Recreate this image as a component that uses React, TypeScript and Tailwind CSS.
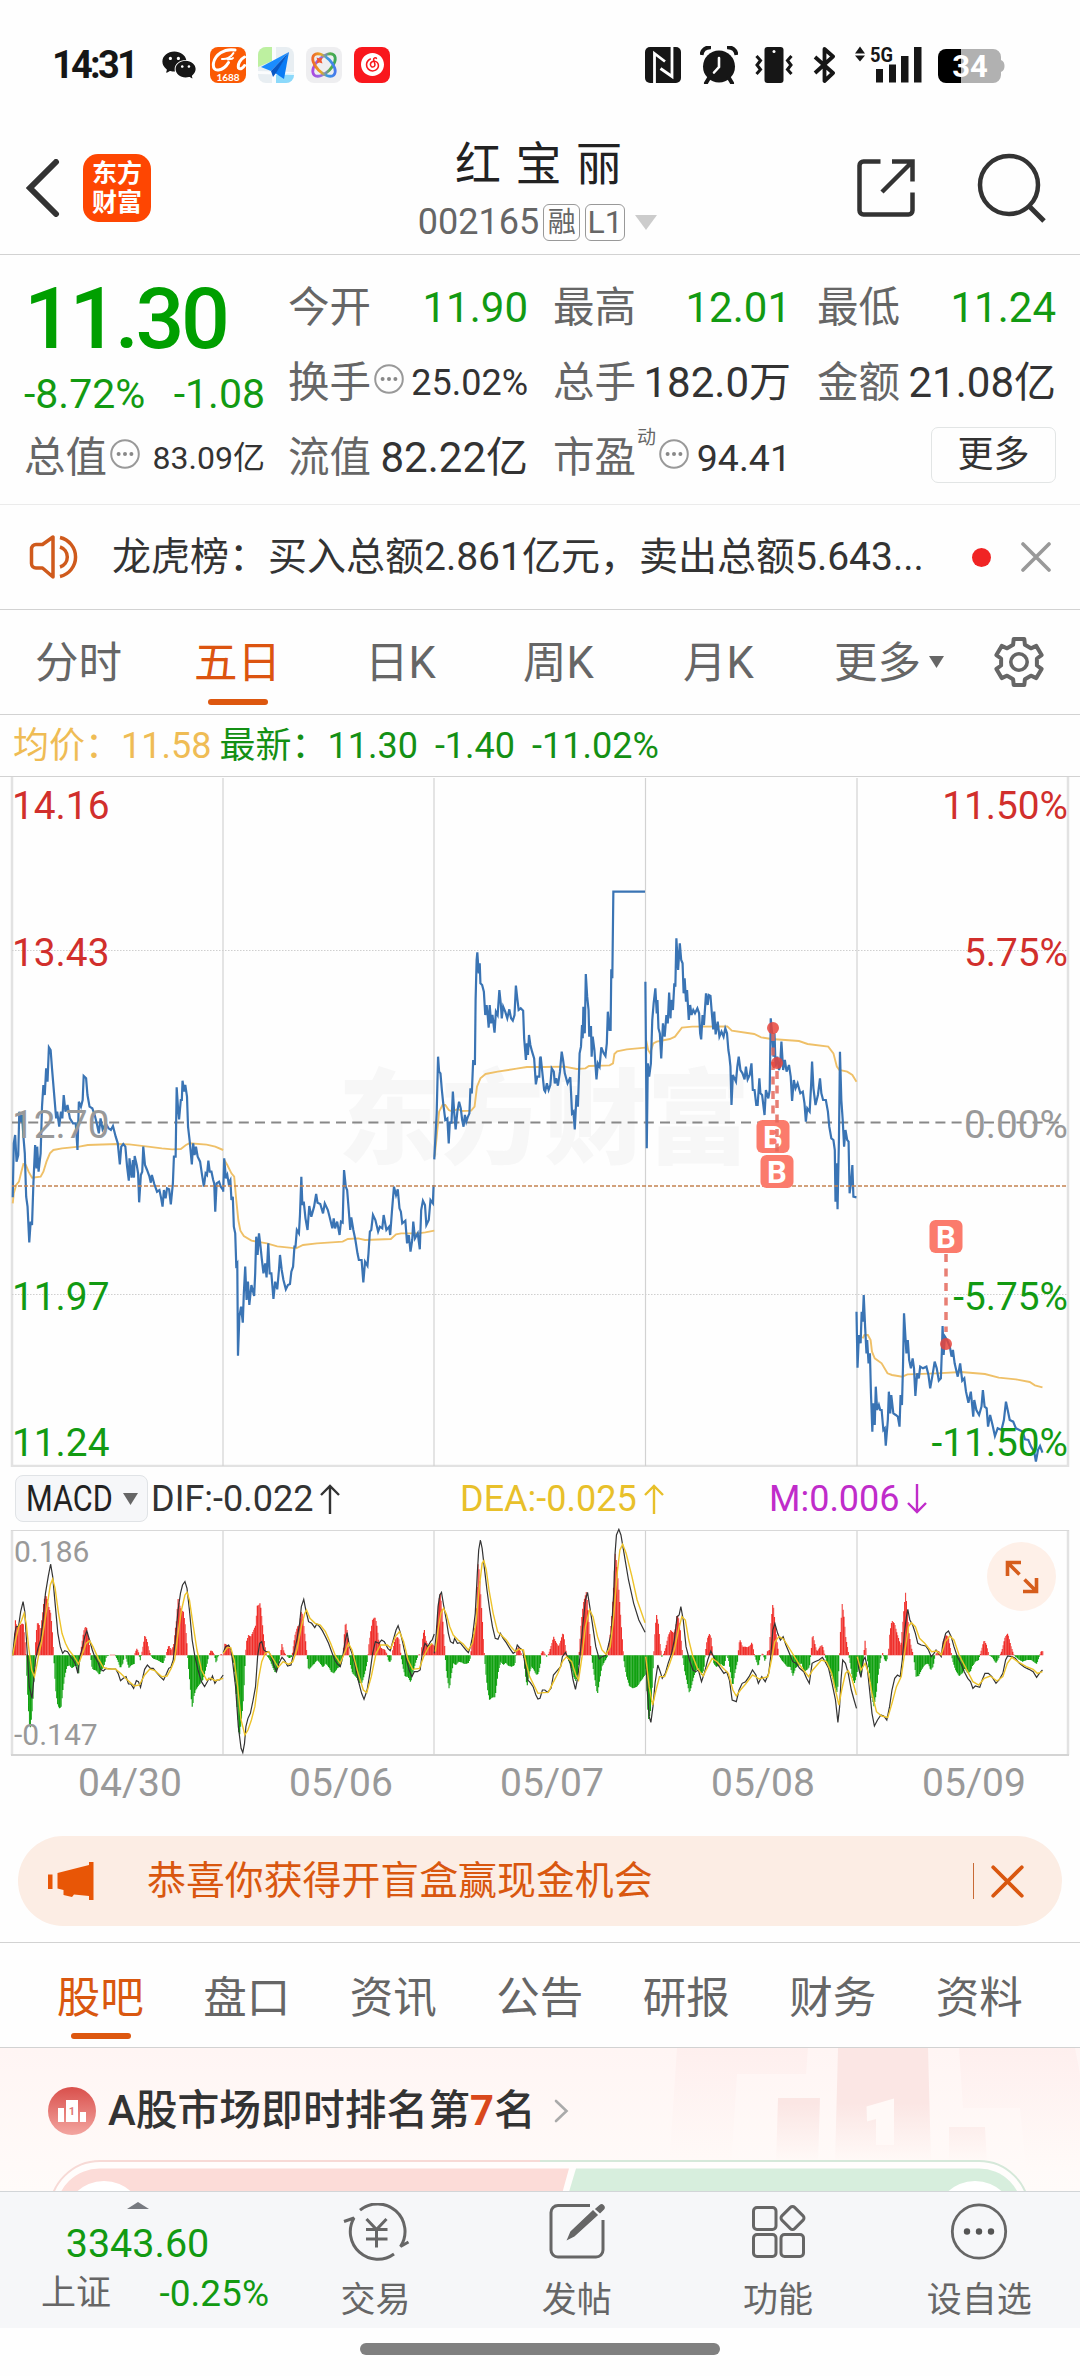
import React from "react";
import { AiFillWechat } from "react-icons/ai";
import { SiNeteasecloudmusic } from "react-icons/si";

/* ---------- Chart data: "x,y" pairs in the chart's own units, one string per trading day ---------- */

const PRICE = [
  "37,472 40,310 44,285 48,365 53,345 56,215 60,245 64,225 68,290 72,340 76,470 80,500 85,607 89,545 93,555 97,430 102,315 106,385 108,320 112,395 118,340 122,200 126,135 130,165 134,85 138,125 142,22 147,30 151,85 157,160 163,235 166,215 172,260 177,215 181,235 185,165 190,215 196,195 203,235 212,250 220,250 225,330 229,185 235,200 240,180 243,108 250,115 254,165 260,200 268,205 275,225 282,255 287,280 292,235 298,268 307,250 315,265 322,270 328,258 336,290 342,310 348,373 352,320 358,312 364,320 369,380 374,422 376,355 382,413 386,360 389,413 391,348 397,375 401,400 404,487 409,405 413,395 416,320 421,375 427,390 434,410 438,428 441,405 448,432 456,455 463,450 468,475 472,500 476,450 481,475 485,445 491,448 496,493 502,430 505,350 510,350 513,142 517,205 520,238 525,180 528,180 530,122 535,155 538,135 543,170 546,260 551,305 557,373 561,310 565,345 569,320 574,350 581,365 586,400 592,440 597,400 601,405 605,362 609,395 614,395 619,420 622,430 625,515 629,430 636,425 641,440 648,450",
  "648,455 651,355 656,415 660,405 664,430 669,420 672,480 676,470 679,560 683,580 686,675 689,670 691,947 695,830 700,800 705,848 708,760 712,680 716,780 720,725 724,795 730,735 738,768 741,700 744,590 748,645 752,580 756,615 760,655 765,700 770,670 774,712 779,610 783,700 788,700 794,777 799,725 805,748 810,690 813,645 818,690 823,720 830,748 836,735 842,732 846,695 851,680 855,620 858,620 862,570 868,580 871,525 875,410 878,495 882,485 887,535 893,570 898,498 904,530 912,500 918,462 922,488 930,492 938,520 943,490 952,510 957,530 965,565 969,535 973,565 979,545 986,585 990,545 995,548 999,390 1004,440 1008,450 1013,515 1017,570 1020,532 1026,570 1032,600 1038,640 1042,660 1050,660 1055,727 1060,665 1067,677 1070,640 1074,575 1078,570 1083,525 1090,540 1098,575 1103,560 1110,565 1114,525 1122,570 1130,560 1133,585 1138,515 1144,440 1150,465 1155,448 1160,505 1164,515 1168,550 1177,542 1182,610 1187,585 1192,635 1197,600 1200,545 1205,595 1213,580 1219,628 1223,510 1228,482 1234,495 1238,555 1245,540 1250,480 1257,490 1259,435",
  "1261,358 1268,220 1272,50 1275,95 1279,100 1283,150 1287,190 1293,240 1299,235 1303,310 1306,248 1311,248 1315,155 1319,220 1323,268 1328,215 1333,185 1338,205 1342,240 1346,260 1350,225 1354,245 1358,232 1363,220 1366,145 1370,160 1374,60 1379,75 1381,-120 1384,-240 1386,-263 1390,-200 1393,-230 1395,-170 1400,-165 1405,-145 1409,-75 1413,-105 1416,-75 1419,-37 1422,-105 1426,-50 1430,-75 1436,-22 1440,-85 1445,-75 1450,-150 1454,-110 1457,-65 1461,-100 1467,-85 1473,-65 1479,-92 1484,-65 1489,-58 1494,-75 1498,-163 1502,-125 1506,-90 1512,-95 1519,-88 1522,-5 1527,60 1530,10 1533,45 1536,-15 1540,15 1545,35 1551,55 1556,133 1560,110 1566,110 1568,55 1570,50 1576,110 1580,150 1583,155 1588,130 1593,150 1598,135 1602,85 1608,95 1611,130 1615,115 1620,137 1626,95 1631,35 1635,60 1640,100 1648,130 1656,112 1661,220 1665,215 1669,268 1674,165 1678,200 1681,110 1683,40 1687,20 1690,-45 1692,-5 1694,-100 1698,-20 1701,-198 1705,-130 1709,-90 1711,-10 1716,-42 1718,50 1721,-10 1726,30 1732,118 1736,70 1741,80 1746,22 1753,40 1758,48 1762,10 1765,-85 1770,-30 1773,-30 1775,-212 1778,-185 1781,-445 1873,-445",
  "1874,-175 1878,325 1881,70 1885,110 1890,70 1894,-60 1898,-110 1903,-155 1907,-80 1909,-120 1912,-35 1916,-20 1920,55 1925,-50 1930,-10 1935,-75 1939,-50 1943,-142 1947,-65 1949,-120 1954,-90 1958,-170 1961,-160 1964,-305 1969,-210 1974,-290 1978,-240 1982,-230 1985,-140 1988,-185 1992,-115 1995,-150 2000,-60 2004,-105 2008,-75 2013,-90 2018,-80 2025,-95 2030,-80 2033,-20 2036,-2 2040,-75 2044,-45 2050,-140 2055,-105 2058,-135 2063,-132 2067,-80 2071,-32 2074,-85 2078,-17 2084,-55 2089,-10 2095,-25 2101,-10 2106,-35 2111,-20 2115,30 2118,50 2121,80 2124,195 2128,105 2137,125 2141,80 2145,50 2150,90 2156,100 2162,118 2166,80 2171,118 2177,105 2182,70 2186,150 2191,150 2196,195 2200,195 2205,115 2208,160 2213,165 2220,225 2224,150 2231,175 2235,150 2238,-65 2242,-20 2246,50 2249,-20 2252,80 2257,50 2262,90 2265,80 2269,5 2274,90 2279,60 2284,95 2291,75 2296,110 2300,183 2305,120 2310,145 2316,130 2324,160 2331,155 2336,190 2340,245 2344,205 2351,215 2355,140 2358,65 2362,145 2368,195 2375,165 2381,115 2385,160 2390,180 2398,180 2404,215 2408,260 2414,295 2420,300 2424,330 2426,485 2429,370 2432,508 2436,300 2439,35 2443,180 2447,240 2451,320 2455,270 2460,300 2464,305 2467,460 2471,430 2475,375 2478,470 2487,472",
  "2487,815 2490,983 2494,885 2499,910 2502,815 2505,845 2508,765 2512,860 2516,940 2518,900 2522,970 2526,940 2529,1060 2533,1175 2536,1090 2540,1155 2543,1040 2547,1110 2552,1095 2556,1110 2560,1110 2565,1170 2569,1165 2572,1217 2578,1140 2581,1055 2585,1120 2588,1065 2594,1120 2601,1125 2607,1130 2612,1160 2615,1065 2619,1095 2622,980 2625,820 2629,890 2632,940 2636,900 2640,960 2645,985 2650,955 2654,985 2658,1068 2663,1000 2668,1015 2672,980 2680,985 2690,980 2696,1005 2701,1045 2707,1010 2714,965 2720,985 2726,1022 2732,1015 2735,930 2737,858 2740,945 2744,890 2750,900 2758,920 2763,950 2767,930 2772,970 2781,1010 2788,970 2794,1022 2800,1015 2805,1055 2812,1088 2819,1055 2826,1130 2829,1080 2835,1110 2843,1125 2850,1100 2854,1050 2859,1100 2865,1105 2869,1160 2875,1125 2882,1155 2889,1188 2897,1165 2908,1170 2915,1140 2921,1085 2926,1110 2932,1140 2942,1145 2950,1165 2960,1170 2970,1175 2976,1198 2986,1200 2994,1220 3003,1235 3008,1265 3014,1230 3020,1218 3027,1238",
];

const AVERAGE = [
  "37,490 40,460 47,435 55,425 62,395 68,372 75,375 83,395 93,413 118,410 126,395 135,365 145,340 155,330 180,325 230,320 255,315 340,312 375,313 430,320 470,325 500,328 525,327 540,315 550,310 600,314 625,320 648,330",
  "650,358 660,375 672,400 680,410 686,480 692,540 698,572 708,588 730,602 775,610 805,619 860,625 880,615 920,610 995,605 1010,597 1040,595 1060,600 1135,597 1150,583 1165,580 1215,580 1235,577 1261,572",
  "1262,350 1268,290 1275,215 1285,195 1293,195 1303,210 1312,214 1330,207 1340,213 1368,212 1378,200 1385,140 1395,115 1410,102 1445,95 1500,86 1530,81 1580,81 1640,80 1675,87 1700,85 1710,78 1770,76 1780,70 1784,42 1792,34 1820,28 1874,23",
  "1876,0 1882,30 1888,40 1897,10 1907,5 1945,-3 1960,-10 1980,-37 2010,-40 2112,-41 2125,-28 2190,-18 2210,-8 2240,-3 2320,3 2345,12 2405,20 2420,40 2430,80 2437,90 2460,95 2475,105 2487,125",
  "2505,895 2510,885 2520,885 2528,900 2532,935 2540,955 2560,970 2577,1000 2590,1005 2620,1010 2635,1003 2720,1000 2790,996 2860,1002 2900,1013 2950,1018 2990,1026 3005,1036 3027,1042",
];

const DIF = [
  "37,586 43,520 47,500 54,498 60,455 67,425 72,455 78,560 85,680 93,715 99,650 103,600 110,565 118,540 125,480 132,400 140,350 147,312 153,350 160,430 168,520 175,560 182,580 188,572 196,575 205,590 213,600 220,615 226,640 232,590 240,560 246,530 252,513 260,540 268,570 275,590 284,605 292,628 300,633 308,625 325,627 336,627 343,640 350,662 358,655 366,650 373,672 380,672 388,685 396,662 402,665 408,682 414,655 420,628 428,615 437,625 445,625 455,638 465,650 475,660 484,640 490,625 496,622 503,600 510,530 517,450 524,400 530,375 537,365 543,385 550,450 558,540 566,590 575,630 585,665 594,680 602,665 607,655 612,660 617,648 624,670 630,660 638,660 648,645",
  "648,578 655,560 664,555 671,570 676,610 684,680 692,800 700,865 705,878 710,850 714,800 720,775 727,760 735,720 742,680 748,590 754,550 760,545 766,570 773,575 780,575 788,590 795,615 803,635 810,610 819,592 826,600 835,618 845,615 853,580 862,540 870,490 875,440 882,418 888,450 896,485 905,490 914,503 920,492 928,500 936,512 945,530 954,550 963,575 972,600 980,612 988,620 995,590 1002,545 1008,518 1015,560 1022,580 1030,610 1040,660 1050,700 1057,718 1066,690 1074,640 1082,580 1090,545 1100,550 1108,540 1116,545 1126,565 1133,572 1142,540 1150,510 1156,497 1163,520 1170,550 1178,590 1188,630 1196,650 1203,635 1212,635 1220,630 1226,580 1234,550 1242,560 1250,545 1255,540 1261,522",
  "1261,580 1266,530 1272,440 1277,405 1282,397 1288,435 1296,480 1302,520 1308,545 1316,550 1320,535 1328,550 1336,548 1345,560 1353,570 1360,578 1366,560 1372,530 1380,460 1386,340 1390,270 1395,240 1400,265 1406,320 1414,390 1422,450 1430,500 1438,535 1446,538 1453,520 1461,535 1470,548 1480,565 1490,580 1497,575 1502,555 1510,565 1518,570 1524,610 1532,660 1540,668 1548,680 1556,705 1562,717 1568,715 1575,690 1582,690 1590,697 1600,685 1607,645 1618,632 1628,620 1633,590 1642,577 1648,590 1656,610 1664,660 1671,688 1678,650 1684,590 1692,500 1700,420 1706,397 1711,430 1720,490 1730,560 1740,597 1748,590 1760,586 1768,550 1775,520 1782,400 1786,280 1790,225 1797,208 1803,225 1812,280 1825,360 1840,430 1855,480 1873,517",
  "1875,590 1880,700 1885,770 1890,787 1896,740 1902,670 1910,615 1917,635 1923,655 1932,640 1940,610 1950,580 1958,540 1966,470 1972,465 1977,440 1984,480 1992,560 2002,600 2012,630 2020,635 2028,630 2037,665 2045,640 2055,600 2064,573 2072,590 2082,610 2092,625 2102,640 2110,635 2118,660 2126,720 2138,725 2146,690 2155,670 2165,665 2175,650 2185,630 2195,645 2202,670 2212,650 2222,665 2232,640 2238,590 2244,510 2250,490 2258,520 2266,540 2274,530 2282,555 2292,580 2302,605 2312,610 2322,625 2334,635 2342,655 2350,670 2358,610 2366,605 2378,600 2388,592 2396,605 2406,625 2416,670 2426,720 2433,787 2438,740 2442,660 2447,600 2455,610 2463,640 2472,690 2480,720 2487,745",
  "2489,590 2494,630 2500,652 2507,600 2512,592 2518,620 2525,690 2532,760 2539,798 2548,780 2558,765 2566,768 2575,780 2583,740 2590,690 2598,655 2606,645 2614,650 2620,600 2626,520 2632,470 2636,448 2642,480 2650,495 2658,520 2665,550 2675,555 2688,558 2696,570 2704,590 2712,580 2718,570 2726,580 2733,590 2738,550 2746,520 2754,513 2762,530 2770,560 2780,590 2790,610 2800,635 2810,655 2818,665 2825,685 2832,678 2845,682 2852,660 2860,640 2870,640 2880,650 2892,670 2902,658 2912,640 2920,600 2926,588 2938,590 2948,595 2960,610 2975,622 2988,628 3000,635 3010,652 3018,640 3027,630",
];

const DEA = [
  "37,586 45,540 55,498 63,480 70,460 76,490 83,560 92,630 100,650 106,620 113,580 120,550 128,500 138,430 146,375 153,357 160,385 170,460 180,520 190,550 200,570 215,590 228,612 240,580 250,550 260,542 270,560 285,595 300,622 315,627 335,627 350,640 370,660 390,678 405,675 420,645 435,627 450,632 470,650 485,648 497,625 507,600 517,520 527,450 537,405 543,397 550,420 560,490 572,570 585,630 600,660 612,655 625,662 648,655",
  "648,580 660,563 670,563 680,600 690,680 700,780 711,825 720,810 730,780 740,740 750,660 760,605 770,580 780,575 795,600 808,622 822,605 838,613 850,605 862,570 875,500 885,460 890,450 900,475 915,490 930,495 945,515 960,550 975,590 988,610 1000,580 1012,550 1022,570 1040,640 1055,690 1065,698 1078,650 1092,580 1105,555 1125,555 1135,565 1148,530 1160,515 1172,545 1185,600 1198,628 1218,625 1230,590 1245,560 1255,550",
  "1264,575 1272,510 1280,460 1288,445 1296,462 1306,500 1316,525 1330,540 1345,552 1360,570 1372,550 1382,490 1392,380 1400,310 1405,302 1412,330 1420,390 1432,460 1445,515 1455,525 1470,540 1485,562 1496,575 1506,568 1520,570 1528,610 1538,650 1550,675 1562,700 1578,698 1592,697 1605,670 1620,640 1633,605 1645,590 1660,605 1672,645 1680,660 1690,590 1700,500 1712,450 1722,470 1735,530 1748,570 1760,583 1772,560 1782,470 1792,340 1800,270 1808,253 1818,280 1835,350 1850,420 1873,488",
  "1875,590 1885,680 1895,735 1905,690 1915,650 1930,650 1945,610 1958,570 1970,510 1980,470 1990,480 2000,540 2012,590 2025,625 2042,648 2055,620 2068,595 2082,605 2100,625 2115,640 2128,690 2138,708 2150,690 2165,672 2185,645 2205,657 2230,650 2240,600 2250,545 2262,530 2275,537 2295,570 2320,612 2348,650 2360,630 2385,600 2400,605 2415,640 2428,700 2436,735 2444,690 2455,640 2463,632 2472,650 2487,705",
  "2489,590 2500,630 2512,610 2522,640 2532,700 2545,755 2560,768 2578,772 2590,730 2603,680 2617,650 2628,570 2638,500 2646,488 2658,500 2670,535 2685,550 2705,575 2720,573 2733,585 2745,545 2758,528 2770,540 2785,585 2805,625 2825,665 2842,675 2858,655 2875,648 2895,663 2912,650 2925,610 2938,592 2955,605 2980,620 3000,628 3012,640 3027,635",
];

const HISTOGRAM =
  "37,586 40,530 43,480 47,500 52,500 57,495 62,490 66,492 70,530 74,586 76,640 80,730 85,815 89,780 93,740 97,660 101,590 102,540 106,490 111,490 116,515 121,470 126,420 131,405 136,420 141,445 146,460 150,510 154,580 157,640 161,700 166,735 171,745 176,740 181,690 187,645 193,620 200,615 207,625 215,618 222,618 227,640 230,600 232,580 236,550 241,515 246,500 251,505 256,540 261,586 266,625 272,630 279,632 287,645 293,630 300,620 307,590 320,584 332,584 340,600 348,625 355,610 361,580 366,600 373,625 380,615 388,612 390,580 396,565 402,580 405,605 410,580 416,545 419,525 425,540 431,570 436,586 442,595 450,598 460,603 472,610 480,586 484,570 489,555 495,570 502,560 507,510 511,480 515,415 520,435 525,450 531,455 537,500 542,560 544,600 549,660 553,710 557,745 562,705 567,690 573,680 580,670 587,660 593,640 600,610 605,586 611,570 616,575 621,584 626,610 631,590 640,582 648,586 " +
  "650,550 658,555 666,560 672,590 677,610 682,670 688,760 693,835 698,790 704,735 708,660 711,586 714,545 720,525 727,530 735,510 741,495 745,437 750,435 754,428 758,465 763,520 768,560 773,586 782,600 790,620 798,640 805,620 812,586 817,552 823,575 830,586 838,595 846,590 850,560 855,525 862,500 868,495 874,450 880,490 886,545 890,586 894,630 903,620 912,610 920,600 928,610 936,622 944,610 952,620 960,635 968,640 978,625 986,620 992,600 996,560 1000,495 1004,490 1008,530 1012,570 1015,610 1022,640 1032,650 1042,670 1050,668 1058,640 1066,600 1069,560 1074,520 1080,480 1087,470 1092,490 1098,540 1106,565 1115,568 1121,580 1127,605 1133,605 1138,575 1145,540 1152,530 1158,540 1163,590 1168,620 1175,650 1183,650 1191,668 1198,635 1206,605 1214,582 1221,586 1225,540 1230,505 1235,540 1242,560 1250,550 1257,555 1261,560 " +
  "1264,540 1268,470 1272,425 1277,400 1282,450 1286,510 1291,580 1293,620 1298,660 1303,690 1308,650 1315,610 1322,615 1330,605 1340,608 1348,612 1358,610 1364,595 1368,555 1374,520 1380,480 1384,380 1387,300 1390,340 1394,400 1399,480 1403,560 1406,600 1410,650 1415,695 1420,720 1428,712 1436,712 1441,670 1446,630 1453,605 1460,615 1467,608 1475,618 1485,620 1493,615 1498,575 1503,560 1508,570 1514,586 1519,590 1523,640 1529,680 1535,640 1542,620 1549,630 1556,645 1562,640 1568,610 1570,580 1574,572 1580,580 1586,590 1592,580 1598,560 1606,530 1612,545 1620,560 1626,545 1633,515 1638,545 1643,580 1648,600 1656,620 1664,650 1671,665 1676,640 1680,580 1685,500 1692,430 1701,395 1705,440 1710,510 1715,580 1720,620 1726,660 1733,705 1739,665 1746,620 1754,605 1762,590 1766,560 1774,480 1780,380 1785,280 1790,320 1796,400 1802,490 1808,575 1811,610 1818,650 1826,678 1836,685 1848,680 1860,662 1874,640 " +
  "1875,600 1877,700 1881,780 1886,765 1891,710 1895,620 1898,560 1901,500 1905,465 1910,490 1915,550 1920,590 1926,580 1932,560 1938,530 1946,510 1954,520 1960,505 1964,465 1968,470 1973,500 1978,560 1981,590 1986,630 1993,665 2000,700 2006,680 2013,650 2020,630 2028,625 2035,645 2042,630 2047,575 2052,535 2058,522 2063,530 2068,580 2071,610 2078,620 2086,618 2093,612 2101,620 2108,582 2114,600 2120,640 2126,680 2132,640 2140,605 2144,550 2148,540 2154,560 2162,560 2170,562 2178,555 2182,545 2188,580 2194,600 2200,620 2206,590 2213,578 2220,605 2226,575 2232,570 2237,490 2243,425 2248,480 2254,540 2260,586 2268,600 2276,610 2284,620 2293,620 2301,648 2308,625 2318,615 2326,610 2333,635 2341,630 2349,620 2354,570 2358,520 2364,550 2371,575 2379,560 2386,555 2393,582 2398,605 2406,625 2414,650 2422,680 2430,700 2435,610 2439,510 2444,430 2449,470 2454,530 2462,578 2467,610 2473,650 2480,670 2487,640 " +
  "2489,610 2498,650 2505,605 2510,540 2516,590 2523,640 2530,710 2536,740 2543,700 2549,640 2555,600 2561,578 2567,600 2573,605 2579,570 2582,520 2588,482 2596,490 2603,520 2609,540 2614,560 2618,510 2623,450 2628,395 2633,455 2638,520 2644,560 2651,586 2658,650 2666,648 2674,630 2683,615 2693,610 2701,630 2708,620 2714,585 2723,572 2732,582 2737,545 2744,525 2752,530 2759,570 2764,600 2773,630 2783,648 2793,640 2800,625 2808,640 2816,635 2822,618 2831,605 2840,600 2848,570 2856,540 2863,555 2870,586 2880,592 2890,610 2898,595 2908,570 2917,530 2925,520 2933,555 2943,586 2956,598 2968,605 2980,600 2993,600 3009,612 3016,590 3022,572 3028,575";

const ZERO = 586;
const BAR_STEP = 2.554;

/** Samples the histogram envelope into evenly spaced bars above and below the zero line. */
function histogramBars() {
  const pts = HISTOGRAM.split(" ").map((p) => p.split(",").map(Number));
  let up = "";
  let upAlt = "";
  let down = "";
  let downAlt = "";
  let seg = 0;
  let i = 0;
  for (let x = 38; x < 3028; x += BAR_STEP) {
    while (seg < pts.length - 2 && pts[seg + 1][0] < x) seg++;
    const [x0, y0] = pts[seg];
    const [x1, y1] = pts[seg + 1];
    const t = Math.min(1, Math.max(0, (x - x0) / (x1 - x0 || 1)));
    const y = Math.round(y0 + (y1 - y0) * t);
    const bar = `M${x.toFixed(1)} ${ZERO}V${y}h${(BAR_STEP * 1.3).toFixed(2)}V${ZERO}z`;
    const alt = i % 3 === 0;
    if (y < ZERO) alt ? (upAlt += bar) : (up += bar);
    else alt ? (downAlt += bar) : (down += bar);
    i++;
  }
  return { up, upAlt, down, downAlt };
}

const BARS = histogramBars();

const DAY_LINES = [223, 434, 645.5, 857];

/* ---------- Icons ---------- */

function Triangle({ w, h, color, up = false }: { w: number; h: number; color: string; up?: boolean }) {
  return (
    <svg width={w} height={h} viewBox={`0 0 ${w} ${h}`} className="shrink-0">
      <path d={up ? `M0 ${h}L${w / 2} 0L${w} ${h}z` : `M0 0H${w}L${w / 2} ${h}z`} fill={color} />
    </svg>
  );
}

function Dots() {
  return (
    <svg width="30" height="30" viewBox="0 0 30 30" className="-mt-2 shrink-0">
      <circle cx="15" cy="15" r="13.8" fill="none" stroke="#999" strokeWidth="2" />
      <circle cx="8.6" cy="15" r="2" fill="#888" />
      <circle cx="15" cy="15" r="2" fill="#888" />
      <circle cx="21.4" cy="15" r="2" fill="#888" />
    </svg>
  );
}

function Cross({ size, color, sw }: { size: number; color: string; sw: number }) {
  return (
    <svg width={size} height={size} viewBox="0 0 30 30" className="shrink-0">
      <path d="M2 2L28 28M28 2L2 28" stroke={color} strokeWidth={sw} strokeLinecap="round" />
    </svg>
  );
}

function Gear() {
  const pts: string[] = [];
  for (let k = 0; k < 6; k++) {
    for (const [da, r] of [[-19, 18.2], [-13, 23.6], [13, 23.6], [19, 18.2]]) {
      const a = ((k * 60 - 90 + da) * Math.PI) / 180;
      pts.push(`${(26 + r * Math.cos(a)).toFixed(1)},${(26 + r * Math.sin(a)).toFixed(1)}`);
    }
  }
  return (
    <svg width="52" height="52" viewBox="0 0 52 52">
      <polygon points={pts.join(" ")} fill="none" stroke="#666" strokeWidth="4" strokeLinejoin="round" />
      <circle cx="26" cy="26" r="8.2" fill="none" stroke="#666" strokeWidth="3.6" />
    </svg>
  );
}

function Arrow({ color, down = false }: { color: string; down?: boolean }) {
  return (
    <svg width="20" height="30" viewBox="0 0 20 30" className={down ? "rotate-180" : ""}>
      <path d="M10 30V2M1 11L10 2L19 11" fill="none" stroke={color} strokeWidth="2.4" />
    </svg>
  );
}

function StatusIcons() {
  return (
    <div className="flex items-center">
      <AiFillWechat className="size-[38px] text-[#161616]" />
      <svg width="36" height="36" viewBox="0 0 36 36" className="ml-[12px]">
        <rect width="36" height="36" rx="8" fill="#fb5a04" />
        <path d="M25 3C14 1 5 8 3.500 16c-.8 5 1.500 7.500 5 7 4.500-.6 8-4 10-7.500" fill="none" stroke="#fff" strokeWidth="3" strokeLinecap="round" />
        <path d="M12 12c4 .5 9-1.500 11.500-6M18 12.500c2-1 3.500.5 5-1.500" fill="none" stroke="#fff" strokeWidth="2" strokeLinecap="round" />
        <path d="M34.500 10c-4 2-7 7-6 11 2 2 4.500 0 6-2.500" fill="none" stroke="#fff" strokeWidth="3" strokeLinecap="round" />
        <text x="18" y="33.5" fontSize="10" fontWeight="700" textAnchor="middle" fill="#fff" fontFamily="Lato">1688</text>
      </svg>
      <svg width="36" height="36" viewBox="0 0 36 36" className="ml-[12px]">
        <rect width="36" height="36" rx="8" fill="#e8eef2" />
        <path d="M0 20V8a8 8 0 0 1 8-8h6v14z" fill="#bdf0a0" />
        <path d="M18 26h18v2a8 8 0 0 1-8 8H18z" fill="#8bd9fb" />
        <path d="M14 0h4v36h-4zM0 24l36 1v3l-36-1z" fill="#fff" opacity=".8" />
        <path d="M31 5L3 20l10 4z" fill="#1a8cff" />
        <path d="M31 5L26 32l-9-6z" fill="#0a7cf5" />
        <path d="M31 5L13 24l2 6 3-4z" fill="#0757c4" />
      </svg>
      <svg width="36" height="36" viewBox="0 0 36 36" className="ml-[12px]">
        <defs>
          <linearGradient id="orbitA" gradientUnits="userSpaceOnUse" x1="8" y1="28" x2="28" y2="8">
            <stop offset="0" stopColor="#b23fe0" />
            <stop offset=".5" stopColor="#8c7be0" />
            <stop offset=".7" stopColor="#58b04a" />
            <stop offset="1" stopColor="#2fa35c" />
          </linearGradient>
          <linearGradient id="orbitB" gradientUnits="userSpaceOnUse" x1="8" y1="8" x2="28" y2="28">
            <stop offset="0" stopColor="#f0562e" />
            <stop offset=".4" stopColor="#e8a923" />
            <stop offset=".6" stopColor="#3a9be0" />
            <stop offset="1" stopColor="#4b6ef0" />
          </linearGradient>
        </defs>
        <rect width="36" height="36" rx="8" fill="#eeeef0" />
        <ellipse cx="18" cy="18" rx="7.500" ry="14" fill="none" stroke="url(#orbitA)" strokeWidth="2.800" transform="rotate(45 18 18)" />
        <ellipse cx="18" cy="18" rx="7.500" ry="14" fill="none" stroke="url(#orbitB)" strokeWidth="2.800" transform="rotate(-45 18 18)" />
        <path d="M10.500 10.500l3 1 3-1-1 3 1 3-3-1-3 1 1-3z" fill="#f0562e" />
      </svg>
      <div className="ml-[12px] flex size-9 items-center justify-center rounded-lg bg-[#f9171d]">
        <SiNeteasecloudmusic className="size-[23px] text-white" />
      </div>
    </div>
  );
}

function SystemIcons() {
  return (
    <div className="flex items-center">
      <svg width="36" height="36" viewBox="0 0 36 36">
        <rect width="36" height="36" rx="5" fill="#161616" />
        <path d="M9.500 36V6.500L20 14.500M27 0V29.500L15.500 21.500" fill="none" stroke="#fff" strokeWidth="2.800" />
      </svg>
      <svg width="38" height="38" viewBox="0 0 38 38" className="ml-[19px]">
        <circle cx="19" cy="20.500" r="16" fill="#161616" />
        <path d="M9 32l-3 5M29 32l3 5" stroke="#161616" strokeWidth="4" strokeLinecap="round" />
        <path d="M1.500 9C2 4 6 1 11 1.200M36.500 9C36 4 32 1 27 1.200" stroke="#161616" strokeWidth="4" fill="none" />
        <path d="M19 12v9l-5 5.500" stroke="#fff" strokeWidth="2.600" fill="none" strokeLinecap="round" />
      </svg>
      <svg width="38" height="36" viewBox="0 0 38 36" className="ml-[17px]">
        <rect x="9.500" width="19" height="36" rx="3" fill="#161616" />
        <circle cx="19" cy="4.500" r="1.500" fill="#fff" />
        <path d="M1.500 9l4 4.500-3.500 4.500 3.500 4.500-4 4.500M36.500 9l-4 4.500 3.500 4.500-3.500 4.500 4 4.500" fill="none" stroke="#161616" strokeWidth="3" />
      </svg>
      <svg width="22" height="38" viewBox="0 0 22 38" className="ml-[20px]">
        <path d="M2 11L20 27L11.500 35V3L20 10.500L2 27" fill="none" stroke="#161616" strokeWidth="3.800" strokeLinejoin="round" />
      </svg>
      <svg width="68" height="37" viewBox="0 0 68 37" className="ml-[20px] overflow-visible">
        <path d="M0 7.500L5 0.500L10 7.500zM0 9.500L5 15.500L10 9.500z" fill="#161616" />
        <text x="15" y="16" fontSize="20.500" fontWeight="700" fill="#161616" fontFamily="Roboto" textLength="23" lengthAdjust="spacingAndGlyphs">5G</text>
        <path d="M21 23h7v13.500h-7zM34 18.500h7v18h-7zM46 10h7.500v26.500H46zM59 1h7.500v35.500H59z" fill="#161616" />
      </svg>
      <div className="relative mt-[2px] ml-[15px] h-[34px] w-[68px]">
        <svg width="68" height="34" viewBox="0 0 68 34">
          <path d="M8 0h47a8 8 0 0 1 8 8v3c2.500 1 3.500 3 3.500 6s-1 5-3.500 6v3a8 8 0 0 1-8 8H8z" fill="#b1b1b1" />
          <path d="M23 0H8a8 8 0 0 0-8 8v18a8 8 0 0 0 8 8h15z" fill="#000" />
        </svg>
        <span className="absolute -top-px left-0 w-[64px] text-center text-[31px] leading-[37px] font-bold text-white">34</span>
      </div>
    </div>
  );
}

/* ---------- Sections ---------- */

function StatusBar() {
  return (
    <div className="flex h-[96px] items-center justify-between pt-[33px] pl-[52px] pr-[74px]">
      <div className="flex items-center">
        <span className="w-[108px] text-[38px] leading-[38px] font-bold tracking-[-2.8px] text-[#161616]">14:31</span>
        <StatusIcons />
      </div>
      <SystemIcons />
    </div>
  );
}

function Header() {
  return (
    <header className="flex h-[159px] items-center justify-between border-b border-[#d2d2d2] pt-[25px] pl-[26px] pr-[34px]">
      <div className="flex w-[303px] items-center">
        <svg width="34" height="58" viewBox="0 0 34 58">
          <path d="M30 3L4 29L30 55" fill="none" stroke="#333" strokeWidth="6" strokeLinecap="round" />
        </svg>
        <div className="ml-[23px] flex size-[68px] flex-col items-center justify-center rounded-[15px] bg-[#fe4602] text-[25px] leading-[29px] font-bold text-white">
          <span>东方</span>
          <span>财富</span>
        </div>
      </div>
      <div className="flex flex-col items-center">
        <h1 className="pl-[2px] text-[46px] leading-[60px] text-[#222] [word-spacing:3px]">红 宝 丽</h1>
        <div className="mt-[10px] flex items-center text-[36px] leading-[37px] text-[#666]">
          <span>002165</span>
          <span className="ml-[4px] flex h-[37px] w-[37px] items-center justify-center rounded-[6px] border-[1.5px] border-[#999] text-[28px]">融</span>
          <span className="ml-[5px] flex h-[37px] w-[40px] items-center justify-center rounded-[6px] border-[1.5px] border-[#999] text-[32px]">L1</span>
          <span className="ml-[10px]">
            <Triangle w={22} h={15} color="#ccc" />
          </span>
        </div>
      </div>
      <div className="flex w-[300px] items-center justify-end">
        <svg width="58" height="58" viewBox="0 0 58 58">
          <path d="M23.500 2.500H6.500a4 4 0 0 0-4 4V51.500a4 4 0 0 0 4 4H51.500a4 4 0 0 0 4-4V33.500M35 2.500H55.500V22.500M55.500 2.500L25 33" fill="none" stroke="#333" strokeWidth="4.500" />
        </svg>
        <svg width="70" height="70" viewBox="0 0 70 70" className="ml-[61px]">
          <circle cx="33" cy="32" r="29" fill="none" stroke="#333" strokeWidth="4.500" />
          <path d="M53 53L68 68" stroke="#333" strokeWidth="5" />
        </svg>
      </div>
    </header>
  );
}

function Cell({ label, value, green, size = "text-[42px]", icon, sup }: { label: string; value: string; green?: boolean; size?: string; icon?: boolean; sup?: string }) {
  return (
    <div className="flex h-[75px] items-center justify-between whitespace-nowrap">
      <div className="flex items-center text-[41.5px] leading-[48px] text-[#666]">
        {label}
        {sup && <span className="mt-[-40px] ml-[1px] text-[19px] leading-[20px]">{sup}</span>}
        {icon && (
          <span className="flex pl-[3px]">
            <Dots />
          </span>
        )}
      </div>
      <div className={`${size} leading-[48px] ${green ? "text-[#129a12]" : "text-[#333]"}`}>{value}</div>
    </div>
  );
}

function Quote() {
  return (
    <section className="flex h-[250px] border-b border-[#ebebeb] pt-[15px] pl-[24px]">
      <div className="w-[241px] whitespace-nowrap">
        <div className="flex h-[97px] items-center text-[86px] leading-[97px] font-medium tracking-[-3.4px] text-[#009f00]">11.30</div>
        <div className="flex h-[54px] items-center justify-between text-[41px] leading-[54px] text-[#129a12]">
          <span>-8.72%</span>
          <span>-1.08</span>
        </div>
        <div className="-mt-px">
          <Cell label="总值" value="83.09亿" size="text-[32px]" icon />
        </div>
      </div>
      <div className="ml-[23px] w-[240px]">
        <Cell label="今开" value="11.90" green />
        <Cell label="换手" value="25.02%" size="text-[36px]" icon />
        <Cell label="流值" value="82.22亿" />
      </div>
      <div className="ml-[25px] w-[238px]">
        <Cell label="最高" value="12.01" green />
        <Cell label="总手" value="182.0万" />
        <Cell label="市盈" value="94.41" size="text-[37.500px]" icon sup="动" />
      </div>
      <div className="ml-[26px] w-[239px]">
        <Cell label="最低" value="11.24" green />
        <Cell label="金额" value="21.08亿" />
        <div className="flex h-[69px] items-center justify-end">
          <button className="h-[56px] w-[125px] rounded-[7px] border-[1.5px] border-[#e2e5e5] text-[36px] leading-[50px] text-[#333]">更多</button>
        </div>
      </div>
    </section>
  );
}

function News() {
  return (
    <section className="flex h-[105px] items-center border-b border-[#d2d2d2] pl-[29px] pr-[29px]">
      <svg width="52" height="46" viewBox="0 0 52 46">
        <path d="M24 3V43L13.500 34H7a4.500 4.500 0 0 1-4.500-4.500V15A4.500 4.500 0 0 1 7 10.500H13.500z" fill="none" stroke="#cf5a1c" strokeWidth="3.500" strokeLinejoin="round" />
        <path d="M31 3.500a20 20 0 0 1 0 39M31 13a10.500 10.500 0 0 1 0 20" fill="none" stroke="#cf5a1c" strokeWidth="3.500" />
      </svg>
      <span className="ml-[31px] text-[39px] leading-[50px] whitespace-nowrap text-[#333]">龙虎榜：买入总额2.861亿元，卖出总额5.643...</span>
      <span className="ml-auto size-[19px] rounded-full bg-[#f02424]" />
      <span className="ml-[30px]">
        <Cross size={30} color="#999" sw={3.6} />
      </span>
    </section>
  );
}

function PeriodTabs() {
  return (
    <nav className="flex h-[105px] items-center border-b border-[#d2d2d2] pt-[4px] text-[43.500px] leading-[60px] whitespace-nowrap text-[#666]">
      <span className="ml-[35px] w-[159px]">分时</span>
      <span className="relative w-[171px] text-[#dc5410]">
        五日
        <i className="absolute top-[65px] left-[14px] h-[6px] w-[60px] rounded-full bg-[#dd570f]" />
      </span>
      <span className="w-[158px]">日K</span>
      <span className="w-[160px]">周K</span>
      <span className="w-[151px]">月K</span>
      <span className="flex items-center">
        更多
        <span className="mt-[-4px] ml-[8px]">
          <Triangle w={15} h={12} color="#666" />
        </span>
      </span>
      <span className="mt-[-4px] ml-auto pr-[35px]">
        <Gear />
      </span>
    </nav>
  );
}

function Summary() {
  return (
    <div className="flex h-[62px] items-center border-b border-[#d2d2d2] pl-[13px] text-[36px] leading-[50px] whitespace-nowrap text-[#149014]">
      <span className="text-[#efbc55]">均价：11.58</span>
      <span className="ml-[8px]">最新：11.30</span>
      <span className="ml-[17px]">-1.40</span>
      <span className="ml-[17px]">-11.02%</span>
    </div>
  );
}

const AXIS = [
  { price: "14.16", pct: "11.50%", place: "top-[5px]", color: "text-[#d12f2c]" },
  { price: "13.43", pct: "5.75%", place: "top-[152px]", color: "text-[#d12f2c]" },
  { price: "12.70", pct: "0.00%", place: "top-[324px]", color: "text-[#999]" },
  { price: "11.97", pct: "-5.75%", place: "top-[496px]", color: "text-[#129a12]" },
  { price: "11.24", pct: "-11.50%", place: "top-[642px]", color: "text-[#129a12]" },
];

function Marker({ x, y, lineX, from, to, dotY }: { x: number; y: number; lineX: number; from: number; to: number; dotY: number }) {
  return (
    <g>
      <rect x={x} y={y} width="33" height="33" rx="6" fill="#fb7b6c" />
      <text x={x + 16.5} y={y + 27.5} fontSize="31" fontWeight="700" textAnchor="middle" fill="#fff" fontFamily="Roboto">B</text>
      <path d={`M${lineX} ${from}V${to}`} stroke="#e5695c" strokeWidth="3.500" strokeDasharray="8 6.500" opacity=".85" />
      <circle cx={lineX} cy={dotY} r="6" fill="#e8453c" opacity=".85" />
    </g>
  );
}

function PriceChart() {
  return (
    <div className="relative h-[690px]">
      <div className="absolute top-[284px] left-[338px] text-[103px] leading-[120px] font-black text-[#f7f7f7]">东方财富</div>
      <svg width="1080" height="690" viewBox="0 0 1080 690" className="absolute inset-0">
        <path d="M12 0V690M1068 0V690M11 689H1069" stroke="#e2e2e2" strokeWidth="2.500" fill="none" />
        {DAY_LINES.map((x) => (
          <path key={x} d={`M${x} 1V689`} stroke="#d2d2d2" strokeWidth="1.200" />
        ))}
        <path d="M12 173.500H1068M12 517.500H1068" stroke="#cfcfcf" strokeWidth="1" strokeDasharray="1.500 1.500" />
        <path d="M12 345.500H1064" stroke="#888" strokeWidth="2" strokeDasharray="10 6.200" />
      </svg>
      <svg width="1080" height="690" viewBox="0 -789 3136 2070" preserveAspectRatio="none" className="absolute inset-0">
        {AVERAGE.map((p) => (
          <polyline key={p.slice(0, 12)} points={p} fill="none" stroke="#efc068" strokeWidth="1.900" vectorEffect="non-scaling-stroke" />
        ))}
        {PRICE.map((p) => (
          <polyline key={p.slice(0, 12)} points={p} fill="none" stroke="#3a74b4" strokeWidth="2.200" vectorEffect="non-scaling-stroke" />
        ))}
      </svg>
      <svg width="1080" height="690" viewBox="0 0 1080 690" className="absolute inset-0">
        <path d="M12 409H1066" stroke="#c38350" strokeWidth="1.300" strokeDasharray="4 2" />
        <Marker x={756.5} y={343} lineX={773} from={256} to={341} dotY={251} />
        <Marker x={760.5} y={378} lineX={777} from={294} to={377} dotY={286} />
        <Marker x={929.500} y={443} lineX={946} from={477} to={555} dotY={567} />
      </svg>
      {AXIS.map((a) => (
        <div key={a.price} className={`absolute right-[12px] left-[12px] flex justify-between text-[38.800px] leading-[48px] ${a.place} ${a.color}`}>
          <span>{a.price}</span>
          <span>{a.pct}</span>
        </div>
      ))}
    </div>
  );
}

function MacdLegend() {
  return (
    <div className="flex h-[63px] items-center pl-[15px] text-[36px] leading-[50px] whitespace-nowrap">
      <button className="flex h-[47px] w-[133px] items-center rounded-[8px] border border-[#e0e3e6] bg-[#f6f7f9] pl-[10px] text-[#222]">
        <span className="inline-block w-[97px] origin-left scale-x-[0.85] text-left">MACD</span>
        <Triangle w={15} h={12} color="#666" />
      </button>
      <div className="ml-[3px] flex w-[309px] items-center gap-[7px] text-[#333]">
        DIF:-0.022
        <Arrow color="#333" />
      </div>
      <div className="flex w-[309px] items-center gap-[7px] text-[#e8c02a]">
        DEA:-0.025
        <Arrow color="#e8c02a" />
      </div>
      <div className="flex items-center gap-[7px] text-[#c02cca]">
        M:0.006
        <Arrow color="#c02cca" down />
      </div>
    </div>
  );
}

function MacdChart() {
  return (
    <div className="relative h-[227px]">
      <svg width="1080" height="227" viewBox="0 0 1080 227" className="absolute inset-0">
        <path d="M12 0V225M1068 0V225" stroke="#e2e2e2" strokeWidth="2.500" fill="none" />
        <path d="M11 .500H1069" stroke="#d8d8d8" strokeWidth="1.200" />
        <path d="M11 225H1069" stroke="#d4d4d4" strokeWidth="2" />
        {DAY_LINES.map((x) => (
          <path key={x} d={`M${x} 1V225`} stroke="#d2d2d2" strokeWidth="1.200" />
        ))}
      </svg>
      <svg width="1080" height="227" viewBox="0 210 3136 681" preserveAspectRatio="none" className="absolute inset-0 overflow-visible">
        <path d={BARS.up} fill="#f02e2a" />
        <path d={BARS.upAlt} fill="#f04a46" />
        <path d={BARS.down} fill="#0fa00f" />
        <path d={BARS.downAlt} fill="#22a822" />
        {DIF.map((p) => (
          <polyline key={p.slice(0, 12)} points={p} fill="none" stroke="#333" strokeWidth="1.200" vectorEffect="non-scaling-stroke" />
        ))}
        {DEA.map((p) => (
          <polyline key={p.slice(0, 12)} points={p} fill="none" stroke="#edc32a" strokeWidth="1.400" vectorEffect="non-scaling-stroke" />
        ))}
      </svg>
      <span className="absolute top-[2px] left-[14px] text-[30px] leading-[40px] text-[#999]">0.186</span>
      <span className="absolute top-[185px] left-[14px] text-[30px] leading-[40px] text-[#999]">-0.147</span>
      <button className="absolute top-[12px] left-[987px] flex size-[69px] items-center justify-center rounded-full bg-[#fef0e8]">
        <svg width="34" height="34" viewBox="0 0 34 34">
          <path d="M16 2.500H2.500V16M2.500 2.500L14.500 14.500M18 31.500H31.500V18M31.500 31.500L19.500 19.500" fill="none" stroke="#d65d1c" strokeWidth="3.600" />
        </svg>
      </button>
    </div>
  );
}

function Dates() {
  return (
    <div className="grid h-[79px] grid-cols-[repeat(5,211px)] pt-[2px] pl-[24.500px] text-center text-[39px] leading-[48px] text-[#999]">
      {["04/30", "05/06", "05/07", "05/08", "05/09"].map((d) => (
        <span key={d}>{d}</span>
      ))}
    </div>
  );
}

function Banner() {
  return (
    <div className="mx-[18px] flex h-[90px] items-center rounded-full bg-[#fcede4] pl-[30px] pr-[38px] text-[#d9570f]">
      <svg width="46" height="38" viewBox="0 0 46 38">
        <path d="M0 12.500h4.500V27H0zM9.500 11L41 3V0h4.500v38H41V34L26 32.500 24 35 15.500 33V28L9.500 26.500z" fill="#e85606" />
      </svg>
      <span className="ml-[53px] text-[38.900px] leading-[50px] whitespace-nowrap">恭喜你获得开盲盒赢现金机会</span>
      <span className="ml-auto mr-[17px] h-[36px] w-px bg-[#c86a35]" />
      <Cross size={33} color="#d9570f" sw={3.4} />
    </div>
  );
}

function ContentTabs() {
  const tabs = ["股吧", "盘口", "资讯", "公告", "研报", "财务", "资料"];
  return (
    <nav className="mt-[16px] grid h-[106px] grid-cols-[repeat(7,146.500px)] border-y border-[#d2d2d2] pl-[27px] text-center text-[43.500px] leading-[111px] text-[#666]">
      {tabs.map((t, i) => (
        <span key={t} className={i === 0 ? "relative text-[#d9570f]" : ""}>
          {t}
          {i === 0 && <i className="absolute top-[90px] left-[44px] h-[6px] w-[60px] rounded-full bg-[#dd570f]" />}
        </span>
      ))}
    </nav>
  );
}

function RankCard() {
  return (
    <section className="relative h-[143px] overflow-hidden bg-gradient-to-b from-[#fff5f4] to-[#fffbf9]">
      <svg width="1080" height="143" viewBox="0 0 1080 143" className="absolute inset-0">
        <defs>
          <linearGradient id="pale" x1="0" y1="0" x2="0" y2="1">
            <stop offset="0" stopColor="#feefee" />
            <stop offset="1" stopColor="#fffaf8" />
          </linearGradient>
          <linearGradient id="rose" gradientUnits="userSpaceOnUse" x1="0" y1="55" x2="0" y2="115">
            <stop offset="0" stopColor="#fbe6e4" />
            <stop offset="1" stopColor="#fffaf8" />
          </linearGradient>
          <linearGradient id="medal" x1="0" y1="0" x2="0" y2="1">
            <stop offset="0" stopColor="#d9504c" />
            <stop offset="1" stopColor="#f3a5a0" />
          </linearGradient>
        </defs>
        <path d="M677 0H808L806 26H737L731 120H669z" fill="url(#pale)" />
        <path d="M959 0H1075L1080 26V120H1026L1020 60H963z" fill="url(#pale)" />
        <path d="M778 50H820L818 115H776zM838 0H928L931 115H835zM949 79H985L987 115H949z" fill="url(#rose)" />
        <path d="M866.500 58.500L894 50.500V97H876V71L867 73.500z" fill="#fff9f7" />
        <path d="M100 113.500H979A49.500 49.500 0 0 1 1028.500 163H50A49.500 49.500 0 0 1 100 113.500z" fill="#fffdfc" />
        <path d="M50 163A50 50 0 0 1 100 113H570" fill="none" stroke="#f7dad6" strokeWidth="2" />
        <path d="M540 113H979A50 50 0 0 1 1029 163" fill="none" stroke="#d5e8d9" strokeWidth="2" />
        <path d="M56 164A43.500 43.500 0 0 1 100 120.500H569L557 164z" fill="#fcdcd8" />
        <path d="M576 120.500H979A43.500 43.500 0 0 1 1022.500 164H563z" fill="#d7eedd" />
        <circle cx="104" cy="173" r="40" fill="#fff" />
        <circle cx="975" cy="173" r="40" fill="#fff" />
        <circle cx="72" cy="63" r="24" fill="url(#medal)" />
        <path d="M58 60h6v14h-6zM66 52h12v22H66zM80 64h6v10h-6z" fill="#fff" />
        <text x="72" y="67" fontSize="11" fontWeight="700" textAnchor="middle" fill="#e07a76" fontFamily="Roboto">1</text>
      </svg>
      <div className="relative flex items-center pt-[35px] pl-[108px] text-[41.800px] leading-[56px] font-medium whitespace-nowrap text-[#333]">
        <span>A股市场即时排名第</span>
        <span className="font-bold text-[#d9481c]">7</span>
        <span>名</span>
        <svg width="15" height="24" viewBox="0 0 15 24" className="ml-[18px]">
          <path d="M2 2L12.500 12L2 22" fill="none" stroke="#aaa" strokeWidth="2.600" strokeLinecap="round" />
        </svg>
      </div>
    </section>
  );
}

function NavItem({ label, children }: { label: string; children: React.ReactNode }) {
  return (
    <div className="flex flex-1 flex-col items-center pt-[11px]">
      <svg width="68" height="60" viewBox="0 0 68 60" fill="none" stroke="#666" strokeWidth="3">
        {children}
      </svg>
      <span className="mt-[14px] text-[35px] leading-[48px] text-[#666]">{label}</span>
    </div>
  );
}

function BottomNav() {
  return (
    <nav className="flex h-[137px] border-t border-[#d2d5d8] bg-[#f6f7f9]">
      <div className="w-[275px] pt-[10px] whitespace-nowrap">
        <div className="flex flex-col items-center">
          <Triangle w={22} h={7} color="#777a80" up />
          <span className="mt-[11px] text-[39.500px] leading-[48px] text-[#129a12]">3343.60</span>
        </div>
        <div className="ml-[41px] flex w-[228px] items-center justify-between pt-[2px] text-[37px] leading-[48px] text-[#129a12]">
          <span className="text-[35px] text-[#666]">上证</span>
          <span>-0.25%</span>
        </div>
      </div>
      <NavItem label="交易">
        <path d="M18 7.200A27.500 27.500 0 0 1 58.500 43.500L66.500 39M52 51A27.500 27.500 0 0 1 12 15L2 18.500" strokeLinejoin="bevel" />
        <path d="M24.500 16L34.500 26.500L44.500 16M24 26.500H45.500M24 36H45.500M34.500 26.500V44.500" />
      </NavItem>
      <NavItem label="发帖">
        <path d="M47 2.500H15a7 7 0 0 0-7 7V47a7 7 0 0 0 7 7H53a7 7 0 0 0 7-7V17" />
        <path d="M25 36L28 29L50 8L54 12L31 33zM53 6L57 2.500a2.500 2.500 0 0 1 3.500 3.500L57 9.500z" fill="#666" stroke="#666" strokeWidth="1.500" />
      </NavItem>
      <NavItem label="功能">
        <rect x="9.500" y="4.500" width="22.500" height="22" rx="3.500" />
        <rect x="9.500" y="31.500" width="22.500" height="22" rx="3.500" />
        <rect x="37" y="31.500" width="22.500" height="22" rx="3.500" />
        <rect x="39.500" y="6" width="18" height="18" rx="3" transform="rotate(45 48.500 15)" />
      </NavItem>
      <NavItem label="设自选">
        <circle cx="34" cy="28.500" r="26.700" strokeWidth="2.800" />
        <g fill="#555" stroke="none">
          <circle cx="22" cy="28.500" r="3.200" />
          <circle cx="34" cy="28.500" r="3.200" />
          <circle cx="46" cy="28.500" r="3.200" />
        </g>
      </NavItem>
    </nav>
  );
}

export default function App() {
  return (
    <div className="h-[2376px] w-[1080px] overflow-hidden bg-[#fefefe] font-['Roboto','Noto_Sans_CJK_SC',sans-serif]">
      <StatusBar />
      <Header />
      <Quote />
      <News />
      <PeriodTabs />
      <Summary />
      <PriceChart />
      <MacdLegend />
      <MacdChart />
      <Dates />
      <Banner />
      <ContentTabs />
      <RankCard />
      <BottomNav />
      <div className="flex h-[48px] justify-center pt-[15px]">
        <div className="h-[12px] w-[360px] rounded-full bg-[#808080]" />
      </div>
    </div>
  );
}
